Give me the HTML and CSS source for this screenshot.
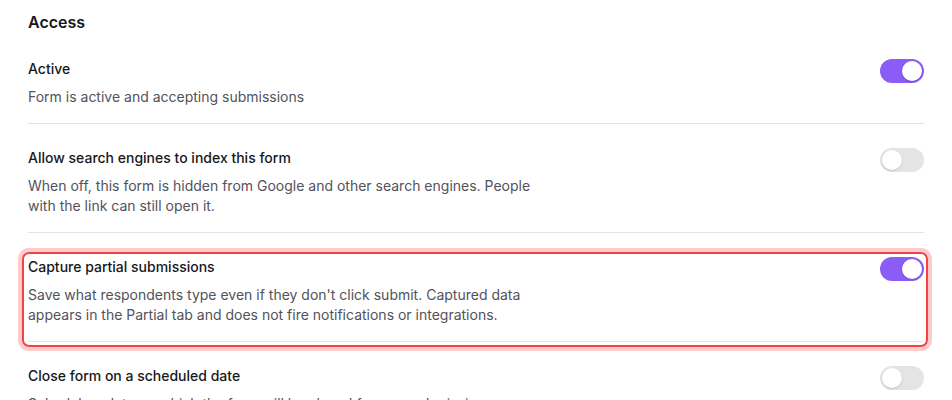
FILE: index.html
```html
<!DOCTYPE html>
<html lang="en">
<head>
<meta charset="utf-8">
<title>Access settings</title>
<link rel="stylesheet" href="styles.css">
</head>
<body>
<section class="section">
  <h2 class="section-title">Access</h2>
  <div class="setting">
    <div class="setting-text">
      <div class="setting-label">Active</div>
      <p class="setting-desc">Form is active and accepting submissions</p>
    </div>
    <span class="toggle on"><span class="knob"></span></span>
  </div>
  <div class="setting">
    <div class="setting-text">
      <div class="setting-label">Allow search engines to index this form</div>
      <p class="setting-desc">When off, this form is hidden from Google and other search engines. People with the link can still open it.</p>
    </div>
    <span class="toggle"><span class="knob"></span></span>
  </div>
  <div class="setting highlighted">
    <div class="setting-text">
      <div class="setting-label">Capture partial submissions</div>
      <p class="setting-desc">Save what respondents type even if they don't click submit. Captured data appears in the Partial tab and does not fire notifications or integrations.</p>
    </div>
    <span class="toggle on"><span class="knob"></span></span>
  </div>
  <div class="setting">
    <div class="setting-text">
      <div class="setting-label">Close form on a scheduled date</div>
      <p class="setting-desc">Schedule a date on which the form will be closed for new submissions.</p>
    </div>
    <span class="toggle"><span class="knob"></span></span>
  </div>
</section>
</body>
</html>
```

FILE: styles.css
```css
* { box-sizing: border-box; }
html, body {
  margin: 0;
  background: #ffffff;
  font-family: Inter, "Noto Sans", "Liberation Sans", sans-serif;
  color: #18181b;
}
.section {
  padding: 10px 28px 0 28px;
}
.section-title {
  margin: 0;
  font-size: 16px;
  line-height: 24px;
  font-weight: 600;
  color: #18181b;
}
.setting {
  position: relative;
  display: flex;
  align-items: flex-start;
  justify-content: space-between;
  gap: 24px;
  padding: 24px 0 16px 0;
  border-bottom: 1px solid #e4e4e7;
}
.setting:first-of-type {
  padding-top: 25px;
}
.setting-text {
  flex: 1 1 auto;
  min-width: 0;
}
.setting-label {
  font-size: 14px;
  line-height: 20px;
  font-weight: 500;
  color: #18181b;
}
.setting-desc {
  margin: 8px 0 0 0;
  max-width: 512px;
  font-size: 14px;
  line-height: 20px;
  color: #52525b;
}
.highlighted::after {
  content: "";
  position: absolute;
  top: 19px;
  left: -6px;
  right: -4px;
  bottom: -6px;
  border: 2px solid #ef4444;
  border-radius: 7px;
  box-shadow: 0 0 0 4px #fecaca;
  pointer-events: none;
}
.toggle {
  position: relative;
  flex: 0 0 auto;
  width: 44px;
  height: 24px;
  border-radius: 12px;
  background: #e4e4e7;
}
.toggle .knob {
  position: absolute;
  top: 2px;
  left: 2px;
  width: 20px;
  height: 20px;
  border-radius: 50%;
  background: #ffffff;
  box-shadow: 0 1px 2px rgba(0, 0, 0, 0.15);
}
.toggle.on {
  background: #8b5cf6;
}
.toggle.on .knob {
  left: 22px;
}
```
